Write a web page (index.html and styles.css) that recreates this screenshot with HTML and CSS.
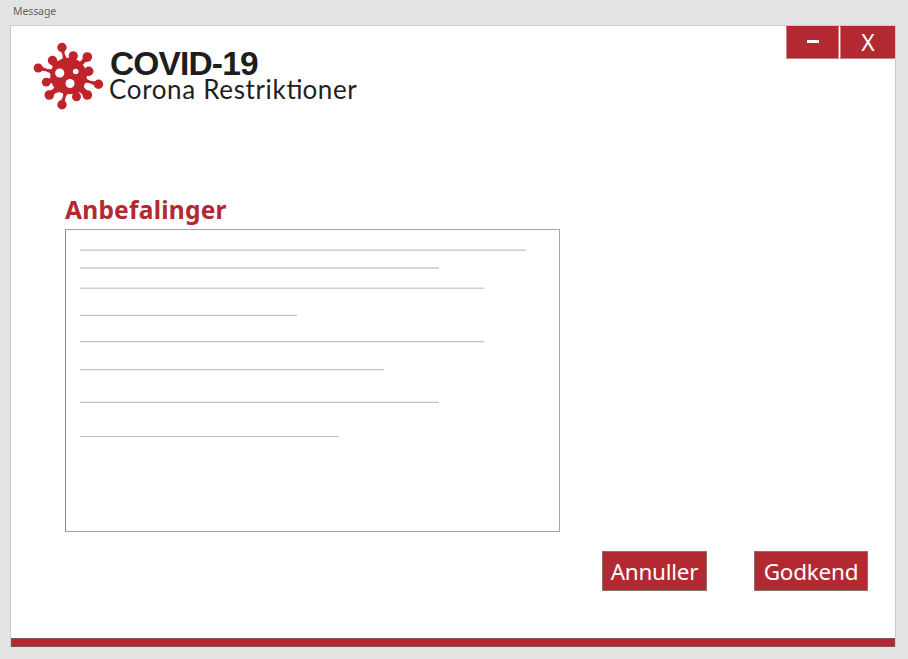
FILE: index.html
```html
<!DOCTYPE html>
<html lang="da">
<head>
<meta charset="utf-8">
<title>Message</title>
<link rel="stylesheet" href="styles.css">
</head>
<body>
<div class="caption">Message</div>
<main class="window">
  <header class="header">
    <div class="brand">
      <svg class="virus" viewBox="0 0 80 80" aria-hidden="true">
        <g fill="#bf242b">
          <circle cx="40.5" cy="40" r="18.3"/>
          <circle cx="34" cy="11.5" r="4.7"/>
          <circle cx="59.3" cy="21" r="4.8"/>
          <circle cx="45.3" cy="19.8" r="4.6"/>
          <circle cx="24.5" cy="24.5" r="4.7"/>
          <circle cx="10.2" cy="32" r="4.6"/>
          <circle cx="18.2" cy="46.2" r="4.4"/>
          <circle cx="21.3" cy="59" r="4.8"/>
          <circle cx="34" cy="68.7" r="4.7"/>
          <circle cx="48.5" cy="60.8" r="4.5"/>
          <circle cx="59.3" cy="59" r="4.8"/>
          <circle cx="70.5" cy="48.3" r="4.7"/>
          <circle cx="60.8" cy="35.3" r="4.7"/>
          <path d="M32 14Q36 19 34 26L40 24Q36 19 36.5 14ZM56 20Q54 26 48 27L54 33Q54 27 60 25ZM12 29Q17 34 25 33L23 38Q18 34 11 35ZM19 56Q26 54 28 49L34 56Q27 55 23 62ZM32 66Q36 61 35 55L40 57Q37 61 36.500 66ZM61 56Q55 52 55 47L48 54Q53 56 57 62ZM69 45Q62 46 58 42L56 47Q62 46 68 51Z"/>
          <path d="M27 22L34 30L28 35L22 27ZM43 23L48 23L50 29L42 29ZM56 34L61 39L56 42ZM19 43L26 41L27 46L20 48ZM44 54L52 54L50 60L45 59Z"/>
        </g>
        <g fill="#fff"><circle cx="31.700" cy="37" r="4.600"/><circle cx="47.700" cy="35.500" r="2.800"/><circle cx="42" cy="47.500" r="4.500"/></g>
      </svg>
      <div class="titles">
        <div class="title">COVID-19</div>
        <div class="subtitle">Corona Restrik<span class="tie">ti</span>oner</div>
      </div>
    </div>
    <div class="controls">
      <button class="control minimize" aria-label="Minimer"><span class="dash"></span></button>
      <button class="control close">X</button>
    </div>
  </header>
  <section class="content">
    <h1 class="heading">Anbefalinger</h1>
    <div class="panel">
      <div class="line l1"></div>
      <div class="line l2"></div>
      <div class="line l3"></div>
      <div class="line l4"></div>
      <div class="line l5"></div>
      <div class="line l6"></div>
      <div class="line l7"></div>
      <div class="line l8"></div>
    </div>
  </section>
  <div class="actions">
    <button class="action cancel">Annuller</button>
    <button class="action approve">Godkend</button>
  </div>
  <footer class="footer"></footer>
</main>
</body>
</html>
```
FILE: styles.css
```css
* { box-sizing: border-box; }
body {
  margin: 0;
  height: 659px;
  overflow: hidden;
  background: #e4e4e4;
  font-family: "Noto Sans", "Open Sans", sans-serif;
}
button { font: inherit; margin: 0; padding: 0; }
.caption {
  height: 25px;
  padding-left: 13px;
  font-size: 10.5px;
  line-height: 23px;
  letter-spacing: -0.1px;
  color: #666;
}
.window {
  width: 886px;
  height: 622px;
  margin-left: 10px;
  display: flex;
  flex-direction: column;
  background: #fff;
  border: 1px solid #cbcbcb;
  border-bottom: 0;
}
.header {
  display: flex;
  justify-content: space-between;
  align-items: flex-start;
  height: 167px;
}
.brand { display: flex; padding: 10px 0 0 17px; }
.virus { width: 80px; height: 80px; flex: none; }
.titles { padding: 14px 0 0 1px; white-space: nowrap; }
.title {
  font: bold 33.5px/28px "Liberation Sans", sans-serif;
  letter-spacing: -0.85px;
  height: 26px;
  padding-left: 1px;
  color: #1e1e1e;
}
.subtitle {
  font: 26px/26px Lato, "Noto Sans", sans-serif;
  letter-spacing: 0.65px;
  color: #1e1e1e;
}
.tie { letter-spacing: 0; }
.controls { display: flex; gap: 1px; }
.control {
  width: 55px;
  height: 33px;
  background: #b22931;
  border: 1px solid #d47f84;
  border-top-color: #b22931;
  color: #fff;
  font-size: 23px;
  line-height: 31px;
}
.minimize { width: 53px; display: flex; justify-content: center; padding-top: 13px; }
.dash { width: 12px; height: 3px; background: #fff; }
.close { border-right: 0; }
.content { padding-left: 54px; }
.heading {
  margin: 0;
  height: 36px;
  font-size: 24.5px;
  line-height: 33px;
  letter-spacing: 0.25px;
  font-weight: 700;
  color: #b22931;
}
.panel {
  width: 495px;
  height: 303px;
  padding: 19px 0 0 14px;
  border: 1px solid #a4a4a4;
  border-left-color: #8c8c8c;
}
.line { height: 2px; background: linear-gradient(#e6e6e6 50%, #cfcfcf 50%); }
.l1 { width: 446px; }
.l2 { width: 359px; margin-top: 16px; background: #d8d8d8; }
.l3 { width: 404px; margin-top: 18px; }
.l4 { width: 217px; margin-top: 25px; background: linear-gradient(#f1f1f1 50%, #c2c2c2 50%); }
.l5 { width: 404px; margin-top: 25px; background: linear-gradient(#c4c4c4 50%, #efefef 50%); }
.l6 { width: 304px; margin-top: 26px; background: linear-gradient(#c2c2c2 50%, #f1f1f1 50%); }
.l7 { width: 359px; margin-top: 30px; background: linear-gradient(#ececec 50%, #c6c6c6 50%); }
.l8 { width: 259px; height: 1px; margin-top: 33px; background: #bcbcbc; }
.actions {
  display: flex;
  justify-content: flex-end;
  gap: 47px;
  padding: 19px 27px 0 0;
}
.action {
  height: 40px;
  background: #b22931;
  border: 1px solid #8c7072;
  color: #fff;
  font-size: 22.5px;
  line-height: 39px;
  letter-spacing: -0.25px;
}
.cancel { width: 105px; }
.approve { width: 114px; }
.footer {
  height: 9px;
  margin-top: auto;
  background: #b22931;
  border: 1px solid #7d5558;
}
```
